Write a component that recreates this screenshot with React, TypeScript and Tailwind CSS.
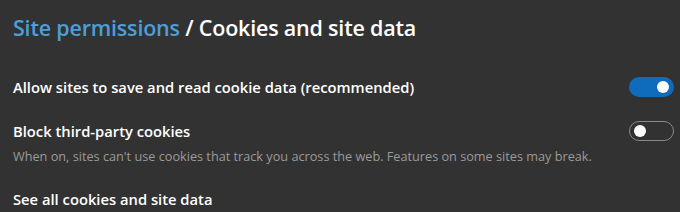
export default function App() {
  return (
    <div className="w-[680px] h-[212px] overflow-hidden bg-[#323232] text-white font-['Open_Sans','Noto_Sans',sans-serif]">
      <div className="pl-[13px] pr-[6px] pt-[13px]">
        <h1 className="text-[21.5px] leading-[30px] font-semibold tracking-[-0.2px]">
          <span className="text-[#4d9ed8]">Site permissions</span>
          <span className="text-white"> / Cookies and site data</span>
        </h1>

        <div className="mt-[32px] flex items-center justify-between h-[24px]">
          <span className="text-[14.75px] font-semibold">Allow sites to save and read cookie data (recommended)</span>
          <div className="w-[45px] h-[20px] rounded-full bg-[#0f6cbd] flex items-center justify-end pr-[5px]">
            <div className="w-[12px] h-[12px] rounded-full bg-white" />
          </div>
        </div>

        <div className="mt-[20px] flex items-center justify-between h-[24px]">
          <span className="text-[14.75px] font-semibold">Block third-party cookies</span>
          <div className="w-[45px] h-[20px] rounded-full border border-[#8a8a8a] flex items-center pl-[4px]">
            <div className="w-[12px] h-[12px] rounded-full bg-white" />
          </div>
        </div>
        <p className="mt-[3px] text-[12.7px] leading-[20px] text-[#9a9a9a]">
          When on, sites can't use cookies that track you across the web. Features on some sites may break.
        </p>

        <div className="mt-[22px] text-[14.75px] font-semibold">See all cookies and site data</div>
      </div>
    </div>
  )
}
